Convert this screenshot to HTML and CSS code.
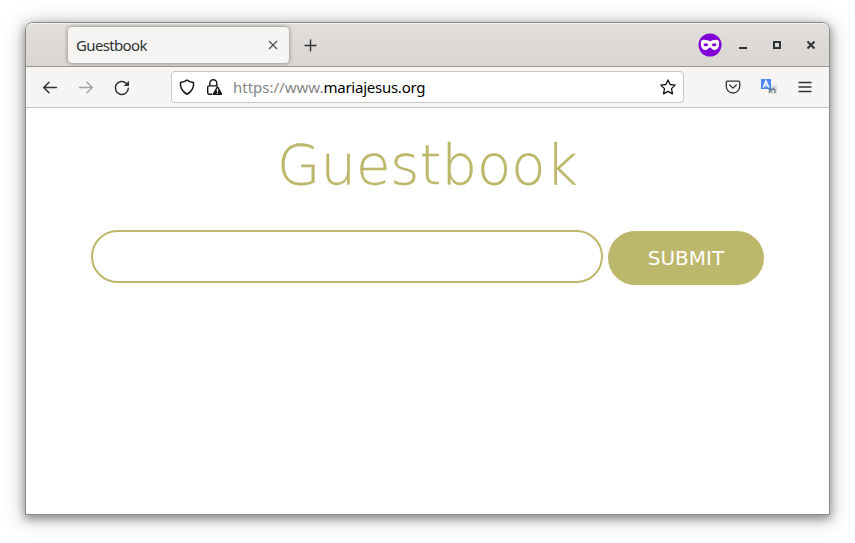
FILE: index.html
```html
<!DOCTYPE html>
<html lang="en">
<head>
<meta charset="utf-8">
<title>Guestbook</title>
<link rel="stylesheet" href="styles.css">
</head>
<body>
<div class="window">
  <header class="titlebar">
    <div class="tab"><span class="tab-title">Guestbook</span>
      <svg class="tab-close" width="10" height="10" viewBox="0 0 10 10"><path d="M1 1l8 8M9 1l-8 8"/></svg>
    </div>
    <svg class="plus" width="14" height="14" viewBox="0 0 14 14"><path d="M6.500 1.500v12M.5 7.500h12"/></svg>
    <div class="window-controls">
      <svg class="mask" width="24" height="24" viewBox="0 0 24 24">
        <circle cx="12" cy="12" r="11.500" fill="#8000d7"/>
        <path fill="#fff" d="M2.800 10Q2.800 6.800 6 6.800C9 6.800 10 8 12 8S15 6.800 18 6.800Q21.200 6.800 21.200 10C21.200 14 19.500 17 16.800 17C14 17 13.500 14.500 12 14.500S10 17 7.200 17C4.500 17 2.800 14 2.800 10Z"/>
        <ellipse cx="7.800" cy="11.700" rx="2.300" ry="1.500" fill="#8000d7"/><ellipse cx="16.200" cy="11.700" rx="2.300" ry="1.500" fill="#8000d7"/>
      </svg>
      <svg width="10" height="10" viewBox="0 0 10 10"><path d="M1 8h8"/></svg>
      <svg width="10" height="10" viewBox="0 0 10 10"><path d="M2 2h6v6H2z"/></svg>
      <svg width="10" height="10" viewBox="0 0 10 10"><path d="M1.500 1.500l7 7M8.500 1.500l-7 7"/></svg>
    </div>
  </header>
  <nav class="toolbar">
    <svg class="icon" viewBox="0 0 16 16"><path d="M14.500 8.500H1.800M7 3.200L1.700 8.500 7 13.800"/></svg>
    <svg class="icon disabled" viewBox="0 0 16 16"><path d="M1.500 8.500h12.700M9 3.200L14.300 8.500 9 13.800"/></svg>
    <svg class="icon reload" viewBox="0 0 16 16"><path d="M14.300 9.300A6.500 6.500 0 1 1 12.300 4.300"/><path class="solid" d="M15 1.700v5.300H9.700z"/></svg>
    <div class="address">
      <svg class="icon dark" viewBox="0 0 16 16"><path d="M8 1C6.500 2.500 3.800 3.300 1.500 3.500C.8 8 3.300 13 8 15.200C12.700 13 15.200 8 14.500 3.500C12.200 3.300 9.500 2.500 8 1Z"/></svg>
      <svg class="icon dark lock" viewBox="0 0 16 16"><path d="M3.800 6.700V4.200a3.500 3.500 0 0 1 7 0V6.700M6 15.200H3Q1.700 15.200 1.700 13.800V8.200Q1.700 6.900 3 6.900H11.300"/><path class="solid" d="M11.500 7.600Q12.200 7.600 12.600 8.300L16 14.500Q16.500 16 15.200 16H7.800Q6.500 16 7 14.500L10.400 8.300Q10.800 7.600 11.500 7.600Z"/><path class="bang" d="M11.500 10.300v2M11.500 14.200v.1"/></svg>
      <span class="url">https://www.<b>mariajesus.org</b></span>
      <svg class="icon dark star" viewBox="0 0 16 16"><path d="M8 .9L10.100 5.500L15.200 6.100L11.500 9.600L12.500 14.900L8 12.400L3.500 14.900L4.500 9.600L.8 6.100L5.900 5.500Z"/></svg>
    </div>
    <div class="actions">
      <svg class="icon pocket" viewBox="0 0 16 16"><path d="M2.600 2.200H13.400Q14.700 2.200 14.700 3.500V7.500A6.700 6.500 0 0 1 1.300 7.500V3.500Q1.300 2.200 2.600 2.200ZM4.700 6L8 9.100L11.300 6"/></svg>
      <svg class="translate" width="16" height="16" viewBox="0 0 16 16"><path fill="#dedfe0" d="M7 6h9v9H8z"/><path fill="#4688f4" d="M0 0h10v10H0z"/><path fill="none" stroke="#fff" stroke-width="1.600" d="M2.300 8.500L5 2l2.700 6.500M3.300 6.500h3.400"/><path fill="none" stroke="#607d8b" stroke-width="1.100" d="M7.500 10.500h5M10 9v4.500M9 13.500q-2-.5 0-2q3-2 4.500-1t0 3.500M12.500 8.500l1 1"/></svg>
      <svg class="icon menu" viewBox="0 0 16 16"><path d="M2 3.500h12M2 8h12M2 12.500h12"/></svg>
    </div>
  </nav>
  <main class="page">
    <h1>Guestbook</h1>
    <form class="form">
      <input class="message" type="text" aria-label="Message">
      <button class="submit" type="button">SUBMIT</button>
    </form>
  </main>
</div>
</body>
</html>
```

FILE: styles.css
```css
* { box-sizing: border-box; }
body { margin: 0; padding: 22px 25px; background: #fff; overflow: hidden; font-family: "Noto Sans", sans-serif; }
svg { display: block; flex: none; overflow: visible; fill: none; }
.window { width: 805px; height: 493px; border: 1px solid #8b8b8b; border-radius: 8px 8px 0 0; background: #fff; box-shadow: 0 3px 9px 1px rgba(0,0,0,.36), 0 3px 22px 3px rgba(0,0,0,.18); }
.titlebar { display: flex; align-items: center; height: 44px; padding: 0 13px 0 42px; border-bottom: 1px solid #9d9690; border-radius: 7px 7px 0 0; background: linear-gradient(#e1dedb, #dad6d2); box-shadow: inset 0 1px #f3f1f0; }
.tab { display: flex; align-items: center; justify-content: space-between; width: 221px; height: 36px; padding: 0 11px 0 8px; border-radius: 4px; background: #f6f5f3; box-shadow: 0 0 4px rgba(0,0,0,.45); }
.tab-title { font-size: 15px; line-height: 20px; letter-spacing: -.65px; color: #2e3436; }
.tab-close { stroke: #4b5052; stroke-width: 1.200; }
.plus { margin-left: 15px; stroke: #2e3436; stroke-width: 1.400; }
.window-controls { display: flex; align-items: center; gap: 24px; margin-left: auto; stroke: #2e3436; stroke-width: 2; }
.mask { margin-right: -8px; stroke: none; }
.toolbar { display: flex; align-items: center; height: 41px; padding: 0 16px; border-bottom: 1px solid #cac7c1; background: #f6f5f3; }
.icon { width: 16px; height: 16px; margin-right: 20px; stroke: #2e3436; stroke-width: 1.500; stroke-linecap: round; stroke-linejoin: round; }
.icon .solid { fill: currentColor; stroke: none; }
.icon .bang { stroke: #fff; }
.reload { color: #2e3436; }
.disabled { stroke: #a3a5a4; }
.dark { stroke: #15141a; color: #15141a; margin-right: 11px; }
.lock { stroke-width: 1.400; margin-right: 11px; }
.address { display: flex; align-items: center; width: 513px; height: 32px; margin-left: 21px; padding: 0 7px; border: 1px solid #cac6c0; border-radius: 4px; background: #fff; }
.url { font-size: 15px; line-height: 20px; color: #858585; white-space: nowrap; }
.url b { font-weight: 400; letter-spacing: -.25px; color: #000; }
.star { margin: 0 0 0 auto; stroke-width: 1.300; }
.actions { display: flex; align-items: center; gap: 20px; margin-left: auto; }
.actions .icon { margin: 0; stroke-width: 1.300; }
.page { padding-top: 21px; }
h1 { margin: 0; text-align: center; font: 200 56px/71px "DejaVu Sans Light", "DejaVu Sans", sans-serif; color: #bdb76b; -webkit-text-stroke: .3px #bdb76b; }
.form { display: flex; justify-content: center; align-items: flex-start; gap: 5px; margin-top: 30px; }
.message { width: 512px; height: 53px; padding: 0 24px; border: 2px solid #bdb76b; border-radius: 27px; background: #fff; outline: none; font: 20px "DejaVu Sans", sans-serif; }
.submit { width: 156px; height: 54px; margin-top: 1px; padding: 0; border: 0; border-radius: 27px; background: #bdb76b; color: #fff; font: 20px "DejaVu Sans", sans-serif; }
```
